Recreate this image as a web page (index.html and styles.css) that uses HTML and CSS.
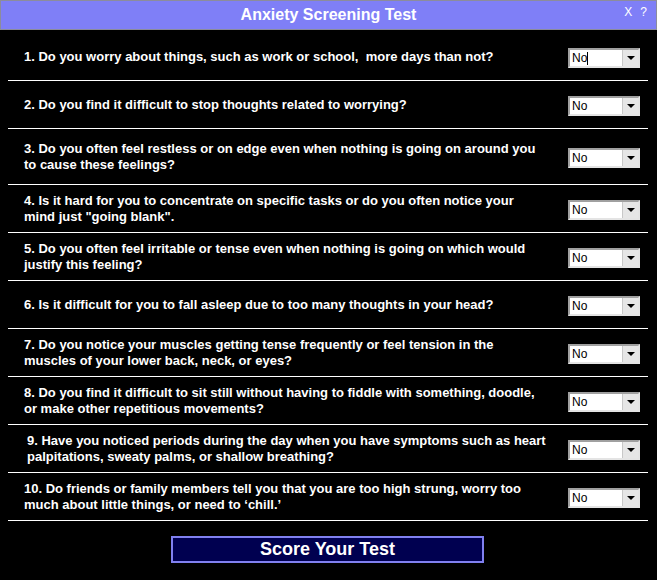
FILE: index.html
```html
<!DOCTYPE html>
<html lang="en">
<head>
    <meta charset="UTF-8">
    <meta name="viewport" content="width=device-width, initial-scale=1.0">
    <title>Anxiety Screening Test</title>
    <link rel="stylesheet" href="styles.css">
</head>
<body>
    <div class="titlebar">
        <h1>Anxiety Screening Test</h1>
        <div class="title-links"><span>X</span><span>?</span></div>
    </div>

    <div class="questions">
        <div class="row row-first">
            <p>1. Do you worry about things, such as work or school, &nbsp;more days than not?</p>
            <div class="combo"><span class="combo-text">No<i class="caret"></i></span><span class="combo-btn"></span></div>
        </div>
        <div class="row">
            <p>2. Do you find it difficult to stop thoughts related to worrying?</p>
            <div class="combo"><span class="combo-text">No</span><span class="combo-btn"></span></div>
        </div>
        <div class="row row-tall">
            <p>3. Do you often feel restless or on edge even when nothing is going on around you to cause these feelings?</p>
            <div class="combo"><span class="combo-text">No</span><span class="combo-btn"></span></div>
        </div>
        <div class="row">
            <p>4. Is it hard for you to concentrate on specific tasks or do you often notice your mind just "going blank".</p>
            <div class="combo"><span class="combo-text">No</span><span class="combo-btn"></span></div>
        </div>
        <div class="row">
            <p>5. Do you often feel irritable or tense even when nothing is going on which would justify this feeling?</p>
            <div class="combo"><span class="combo-text">No</span><span class="combo-btn"></span></div>
        </div>
        <div class="row">
            <p>6. Is it difficult for you to fall asleep due to too many thoughts in your head?</p>
            <div class="combo"><span class="combo-text">No</span><span class="combo-btn"></span></div>
        </div>
        <div class="row">
            <p>7. Do you notice your muscles getting tense frequently or feel tension in the muscles of your lower back, neck, or eyes?</p>
            <div class="combo"><span class="combo-text">No</span><span class="combo-btn"></span></div>
        </div>
        <div class="row">
            <p>8. Do you find it difficult to sit still without having to fiddle with something, doodle, or make other repetitious movements?</p>
            <div class="combo"><span class="combo-text">No</span><span class="combo-btn"></span></div>
        </div>
        <div class="row">
            <p class="indent">9. Have you noticed periods during the day when you have symptoms such as heart palpitations, sweaty palms, or shallow breathing?</p>
            <div class="combo"><span class="combo-text">No</span><span class="combo-btn"></span></div>
        </div>
        <div class="row">
            <p>10. Do friends or family members tell you that you are too high strung, worry too much about little things, or need to ‘chill.’</p>
            <div class="combo"><span class="combo-text">No</span><span class="combo-btn"></span></div>
        </div>
    </div>

    <div class="actions">
        <a href="#" class="btn-score">Score Your Test</a>
    </div>
</body>
</html>
```

FILE: styles.css
```css
body {
    margin: 0;
    background: #000;
    color: #fff;
    font-family: "Liberation Sans", Arial, sans-serif;
}

/* title bar */
.titlebar {
    height: 28px;
    background: #7f7ff7;
    border: 1px solid #8c8c9c;
    display: flex;
    justify-content: center;
    align-items: center;
    position: relative;
}

.titlebar h1 {
    margin: 0;
    font-size: 16px;
    font-weight: bold;
    color: #fff;
}

.title-links {
    position: absolute;
    top: 4px;
    right: 9px;
    font-size: 12px;
    display: flex;
    gap: 8px;
}

/* question rows */
.questions {
    margin: 0 9px 0 8px;
}

.row {
    height: 47px;
    border-bottom: 1px solid #fff;
    display: grid;
    grid-template-columns: 523px 72px;
    column-gap: 21px;
    padding-left: 16px;
    align-items: center;
}

.row-first {
    height: 46px;
    padding-top: 4px;
}

.row-tall {
    height: 55px;
}

.row p {
    margin: 0;
    font-size: 13px;
    font-weight: bold;
    line-height: 16px;
}

.row p.indent {
    padding-left: 3px;
    margin-right: -3px;
}

/* fake combo box */
.combo {
    height: 16px;
    display: flex;
    background: #fff;
    border: 2px solid #a0a0a0;
    border-right-color: #e4e4e4;
    border-bottom-color: #e4e4e4;
    margin-top: 2px;
}

.combo-text {
    flex: 1;
    color: #000;
    font-size: 12px;
    line-height: 16px;
    padding-left: 2px;
}

.caret {
    display: inline-block;
    width: 1px;
    height: 13px;
    background: #000;
    vertical-align: -3px;
}

.combo-btn {
    width: 15px;
    background: #e6e6e6;
    border-left: 1px solid #c8c8c8;
    display: flex;
    align-items: center;
    justify-content: center;
}

.combo-btn::after {
    content: "";
    border-left: 4px solid transparent;
    border-right: 4px solid transparent;
    border-top: 4px solid #000;
}

/* score button */
.actions {
    padding-top: 15px;
    display: flex;
    justify-content: center;
}

.btn-score {
    width: 309px;
    height: 23px;
    margin-left: -2px;
    border: 2px solid #8080f0;
    background: #000050;
    color: #fff;
    text-decoration: none;
    font-size: 18px;
    font-weight: bold;
    line-height: 23px;
    text-align: center;
}
```
